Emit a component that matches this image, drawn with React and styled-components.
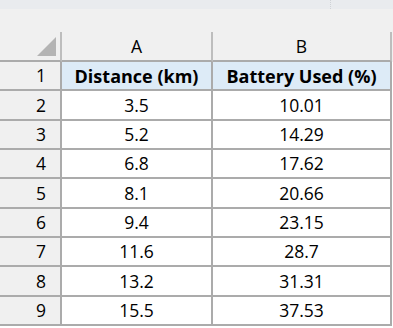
import React from "react";
import styled, { createGlobalStyle } from "styled-components";

const Global = createGlobalStyle`
  html, body { margin: 0; padding: 0; background: #ffffff; }
  body { font-family: "Open Sans", "Noto Sans", sans-serif; color: #000; }
`;

const Page = styled.div`
  width: 393px;
  height: 328px;
  overflow: hidden;
  display: flex;
  flex-direction: column;
  background: #ffffff;
`;

const TopBar = styled.div`
  height: 9px;
  background: #e9ebee;
  display: flex;
`;

const TopSegment = styled.div`
  width: 330px;
  border-right: 1px dotted #cfd2d6;
`;

const Spacer = styled.div`
  height: 23px;
  background: #f0f0f0;
`;

const Sheet = styled.div`
  display: grid;
  grid-template-columns: 62px 151px 179px;
  grid-template-rows: 30px 29px 30px 29px 29px 30px 29px 29px 30px 29px;
  background: linear-gradient(#f0f0f0 0 30px, #ffffff 30px);
`;

const Cell = styled.div`
  box-sizing: border-box;
  border-right: 2px solid #ababab;
  border-bottom: 2px solid #ababab;
  display: flex;
  align-items: center;
  font-size: 17.5px;
  line-height: 1;
  padding-top: 1px;
`;

const Corner = styled(Cell)`
  background: #f0f0f0;
  border-right-color: #bdbdbd;
  align-items: flex-end;
  justify-content: flex-end;
  padding: 0 4px 4px 0;
`;

const ColHead = styled(Cell)`
  background: #f0f0f0;
  justify-content: center;
  border-right-color: #bdbdbd;
`;

const RowHead = styled(Cell)`
  background: #f0f0f0;
  justify-content: flex-end;
  padding-right: 14px;
`;

const DataCell = styled(Cell)`
  justify-content: center;
  background: ${(p) => (p.$title ? "#ddebf7" : "#ffffff")};
  font-weight: ${(p) => (p.$title ? 700 : 400)};
  font-size: ${(p) => (p.$title ? "18px" : "17.5px")};
`;

const rows = [
  ["Distance (km)", "Battery Used (%)"],
  ["3.5", "10.01"],
  ["5.2", "14.29"],
  ["6.8", "17.62"],
  ["8.1", "20.66"],
  ["9.4", "23.15"],
  ["11.6", "28.7"],
  ["13.2", "31.31"],
  ["15.5", "37.53"],
];

export default function App() {
  return (
    <>
      <Global />
      <Page>
        <TopBar>
          <TopSegment />
        </TopBar>
        <Spacer />
        <Sheet>
          <Corner>
            <svg width="19" height="19" viewBox="0 0 19 19">
              <polygon points="19,0 19,19 0,19" fill="#b4b4b4" />
            </svg>
          </Corner>
          <ColHead>A</ColHead>
          <ColHead>B</ColHead>
          {rows.map((r, i) => (
            <React.Fragment key={i}>
              <RowHead>{i + 1}</RowHead>
              <DataCell $title={i === 0}>{r[0]}</DataCell>
              <DataCell $title={i === 0}>{r[1]}</DataCell>
            </React.Fragment>
          ))}
        </Sheet>
      </Page>
    </>
  );
}
